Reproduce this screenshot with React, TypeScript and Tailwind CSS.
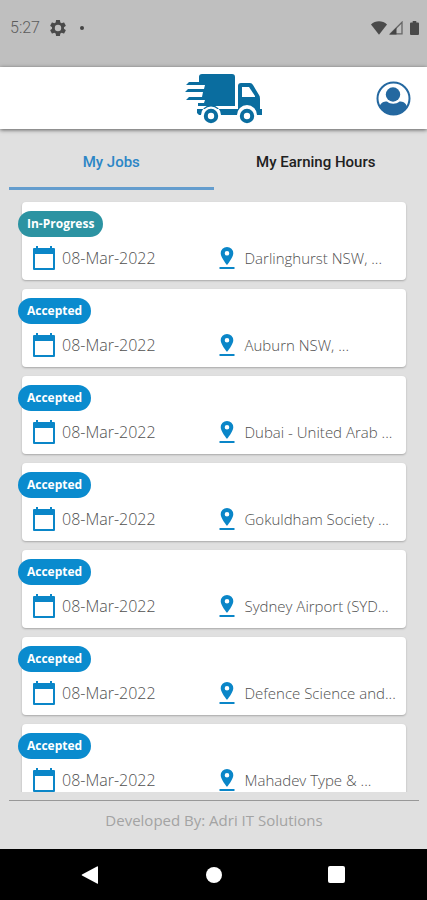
import { useState } from "react";

type Job = { status: "In-Progress" | "Accepted"; date: string; place: string };

const jobs: Job[] = [
  { status: "In-Progress", date: "08-Mar-2022", place: "Darlinghurst NSW, ..." },
  { status: "Accepted", date: "08-Mar-2022", place: "Auburn NSW, ..." },
  { status: "Accepted", date: "08-Mar-2022", place: "Dubai - United Arab ..." },
  { status: "Accepted", date: "08-Mar-2022", place: "Gokuldham Society ..." },
  { status: "Accepted", date: "08-Mar-2022", place: "Sydney Airport (SYD..." },
  { status: "Accepted", date: "08-Mar-2022", place: "Defence Science and..." },
  { status: "Accepted", date: "08-Mar-2022", place: "Mahadev Type & ..." },
];

function StatusBar() {
  return (
    <div className="flex h-[67px] shrink-0 items-center bg-[#bfbfbf] px-2 pb-3 pl-2.5 text-[#4a4a4a]">
      <span className="w-10 font-['Roboto',sans-serif] text-base font-light text-[#5c5c5c]">5:27</span>
      <svg className="size-4" viewBox="2 2 20 20" fill="currentColor" aria-hidden="true">
        <path d="M19.43 12.98c.04-.32.07-.64.07-.98s-.03-.66-.07-.98l2.11-1.65c.19-.15.24-.42.12-.64l-2-3.46c-.12-.22-.39-.3-.61-.22l-2.49 1c-.52-.4-1.08-.73-1.69-.98l-.38-2.65A.49.49 0 0 0 14 2h-4c-.25 0-.46.18-.49.42l-.38 2.65c-.61.25-1.17.59-1.69.98l-2.49-1c-.23-.09-.49 0-.61.22l-2 3.46c-.13.22-.07.49.12.64l2.11 1.65c-.04.32-.07.65-.07.98s.03.66.07.98l-2.11 1.65c-.19.15-.24.42-.12.64l2 3.46c.12.22.39.3.61.22l2.49-1c.52.4 1.08.73 1.69.98l.38 2.65c.03.24.24.42.49.42h4c.25 0 .46-.18.49-.42l.38-2.65c.61-.25 1.17-.59 1.69-.98l2.49 1c.23.09.49 0 .61-.22l2-3.46c.12-.22.07-.49-.12-.64zM12 16a4 4 0 1 1 0-8 4 4 0 0 1 0 8z" />
      </svg>
      <span className="ml-3.5 size-1 rounded-full bg-[#444]" />
      <div className="ml-auto flex items-center">
        <svg className="h-[14px] w-4" viewBox="0 0 16 14" fill="currentColor" aria-hidden="true">
          <path d="M0 3.4C2.2 1.3 5 .3 8 .3s5.800 1 8 3.100L8 13.700z" />
        </svg>
        <svg className="ml-0.5 size-[14px]" viewBox="0 0 14 14" aria-hidden="true">
          <path d="M1.500 12.800L13 1.200v11.600z" fill="none" stroke="#666" strokeWidth="1.300" />
          <path d="M.5 13.500L7.500 6.500v7z" fill="#444" />
        </svg>
        <svg className="ml-[7px] h-[14px] w-[9px]" viewBox="0 0 9 14" fill="currentColor" aria-hidden="true">
          <path d="M2.700 0h3.600v1.500H8a1 1 0 0 1 1 1V13a1 1 0 0 1-1 1H1a1 1 0 0 1-1-1V2.500a1 1 0 0 1 1-1h1.700z" />
        </svg>
      </div>
    </div>
  );
}

function TruckLogo() {
  return (
    <svg className="h-[57px] w-[84px]" viewBox="0 0 84 57" fill="#0a6d9f" role="img" aria-label="Delivery truck">
      <path d="M20 4h30q3 0 3 3v29H16v-3h6l1-3H4l3-3h13l1-5H3l3-3h16l1-4H4l3-3h10V7q0-3 3-3z" />
      <path d="M15 39h41V16q0-3 3-3h9q2 0 3 2l6 10q1 1 1 4v10h2v6h-5a10 10 0 0 0-20 0H39a10 10 0 0 0-20 0h-2l-2-2z" />
      <path d="M60 17h7l6 9v1H60z" fill="#fff" />
      <circle cx="29" cy="46" r="9.500" fill="#fff" />
      <circle cx="65" cy="46" r="9.500" fill="#fff" />
      <circle cx="29" cy="46" r="5.200" fill="none" stroke="#0a6d9f" strokeWidth="4" />
      <circle cx="65" cy="46" r="5.200" fill="none" stroke="#0a6d9f" strokeWidth="4" />
    </svg>
  );
}

function Header() {
  return (
    <header className="relative z-10 grid h-[62px] shrink-0 grid-cols-[1fr_auto_1fr] items-center bg-white px-4 shadow-[0_1px_4px_rgba(0,0,0,0.6)]">
      <span />
      <span className="pl-5">
        <TruckLogo />
      </span>
      <button type="button" aria-label="Profile" className="justify-self-end">
        <svg className="size-[35px]" viewBox="0 0 35 35" aria-hidden="true">
          <circle cx="17.500" cy="17.500" r="16" fill="#fff" stroke="#2468a0" strokeWidth="2" />
          <circle cx="17" cy="13.500" r="7.200" fill="#2468a0" />
          <path d="M3.500 25.500c1.400-4 4-5 7.500-5 3.500 3 9 3 12.500 0 3.500 0 6.100 1 7.500 5-2.500 5-7.500 8-13.500 8S6 30.500 3.500 25.500z" fill="#2468a0" />
        </svg>
      </button>
    </header>
  );
}

function Tabs() {
  const [active, setActive] = useState(0);
  return (
    <div role="tablist" className="mx-[9px] grid h-[61px] shrink-0 grid-cols-2 pt-2 font-['Roboto',sans-serif] text-[15px] font-medium">
      {["My Jobs", "My Earning Hours"].map((label, i) => (
        <button
          key={label}
          type="button"
          role="tab"
          aria-selected={active === i}
          onClick={() => setActive(i)}
          className={
            active === i
              ? "border-b-3 border-[#649dce] text-[#2c86c6]"
              : "border-b-3 border-transparent text-[#202020]"
          }
        >
          {label}
        </button>
      ))}
    </div>
  );
}

function CalendarIcon() {
  return (
    <svg className="h-6 w-[22px] shrink-0" viewBox="0 0 22 24" fill="#0a86c8" aria-hidden="true">
      <path d="M3 0h2v2h12V0h2v2h2q1 0 1 1v20q0 1-1 1H1q-1 0-1-1V3q0-1 1-1h2zM2 8v14h18V8z" fillRule="evenodd" />
    </svg>
  );
}

function PinIcon() {
  return (
    <svg className="h-[22px] w-4 shrink-0" viewBox="0 0 16 22" fill="#0a86c8" aria-hidden="true">
      <path d="M8 0a6.300 6.300 0 0 1 6.300 6.300C14.300 10.500 8 18 8 18S1.700 10.500 1.700 6.300A6.300 6.300 0 0 1 8 0zm0 4a2.300 2.300 0 1 0 0 4.600A2.300 2.300 0 0 0 8 4z" fillRule="evenodd" />
      <path d="M.5 20h15v2H.5z" />
    </svg>
  );
}

function JobCard({ job }: { job: Job }) {
  return (
    <li className="h-[78px] shrink-0 rounded-sm bg-white pt-[9px] shadow-[0_1px_2px_rgba(0,0,0,0.25)]">
      <span
        className={`-ml-1 flex h-[26px] w-fit items-center rounded-full px-[9px] text-xs font-bold text-white ${
          job.status === "Accepted" ? "bg-[#0a8bce]" : "bg-[#2c93a2]"
        }`}
      >
        {job.status}
      </span>
      <div className="mt-[9px] grid grid-cols-2 pl-[11px] pr-0.5 leading-6 text-[#505050]">
        <span className="flex items-center gap-[7px] text-base font-light">
          <CalendarIcon />
          {job.date}
        </span>
        <span className="flex items-center gap-[10px] whitespace-nowrap text-[15px] font-light">
          <PinIcon />
          {job.place}
        </span>
      </div>
    </li>
  );
}

function NavBar() {
  return (
    <nav className="flex h-[51px] shrink-0 items-center justify-between bg-black px-20 text-white">
      <button type="button" aria-label="Back">
        <svg className="size-5" viewBox="0 0 20 20" fill="currentColor" aria-hidden="true">
          <path d="M18 1.500v17q0 .5-.5.300L2 10.500q-.8-.5 0-1l15.500-8.300q.5-.2.5.300z" />
        </svg>
      </button>
      <button type="button" aria-label="Home" className="size-4 rounded-full bg-white" />
      <button type="button" aria-label="Recent apps" className="mr-0.5 size-[17px] rounded-xs bg-white" />
    </nav>
  );
}

export default function App() {
  return (
    <div className="flex h-screen flex-col bg-[#e0e0e0] font-['Open_Sans','Noto_Sans',sans-serif]">
      <StatusBar />
      <Header />
      <Tabs />
      <main className="min-h-0 flex-1 overflow-y-auto pt-3 [scrollbar-width:none]">
        <ul className="ml-[22px] mr-[21px] flex flex-col gap-[9px]">
          {jobs.map((job, i) => (
            <JobCard key={i} job={job} />
          ))}
        </ul>
      </main>
      <footer className="ml-[9px] mr-2 mt-2 h-[49px] shrink-0 border-t border-[#989898] pt-[7px] text-center text-[15px] leading-6 text-[#a3a3a3]">
        Developed By: Adri IT Solutions
      </footer>
      <NavBar />
    </div>
  );
}
